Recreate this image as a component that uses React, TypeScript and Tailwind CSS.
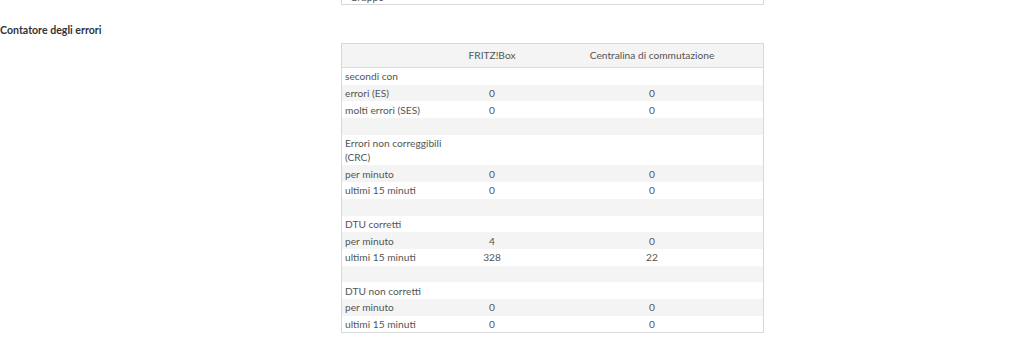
type Row = { label: string[]; a?: string; b?: string };

const rows: Row[] = [
  { label: ["secondi con"] },
  { label: ["errori (ES)"], a: "0", b: "0" },
  { label: ["molti errori (SES)"], a: "0", b: "0" },
  { label: [""] },
  { label: ["Errori non correggibili", "(CRC)"] },
  { label: ["per minuto"], a: "0", b: "0" },
  { label: ["ultimi 15 minuti"], a: "0", b: "0" },
  { label: [""] },
  { label: ["DTU corretti"] },
  { label: ["per minuto"], a: "4", b: "0" },
  { label: ["ultimi 15 minuti"], a: "328", b: "22" },
  { label: [""] },
  { label: ["DTU non corretti"] },
  { label: ["per minuto"], a: "0", b: "0" },
  { label: ["ultimi 15 minuti"], a: "0", b: "0" },
];

export default function App() {
  return (
    <div className="w-[1024px] h-[339px] overflow-hidden bg-white text-[#555] font-['Lato',sans-serif] text-[10.2px]">
      <div className="ml-[341px] w-[423px] h-[5px] border-x border-b border-[#d8d8d8] overflow-hidden">
        <div className="mt-[-10px] pl-[8px] leading-[14px]">Gruppo</div>
      </div>
      <div className="mt-[19px] h-[12px] leading-[12px] font-bold text-[#333] text-[10.6px]">Contatore degli errori</div>
      <div className="mt-[7px] ml-[341px] w-[423px] border border-[#d8d8d8]">
        <div className="grid grid-cols-[101px_98px_1fr] h-[24px] items-center bg-[#f4f4f4] border-b border-[#dcdcdc]">
          <div />
          <div className="text-center">FRITZ!Box</div>
          <div className="text-center">Centralina di commutazione</div>
        </div>
        {rows.map((r, i) => (
          <div
            key={i}
            className={`grid grid-cols-[101px_98px_1fr] py-[1.35px] leading-[14px] ${i % 2 === 1 ? "bg-[#f4f4f4]" : "bg-white"}`}
          >
            <div className="pl-[3px]">
              {r.label.map((l, j) => (
                <div key={j} className="h-[14px]">{l}</div>
              ))}
            </div>
            <div className="text-center">{r.a ?? ""}</div>
            <div className="text-center">{r.b ?? ""}</div>
          </div>
        ))}
      </div>
    </div>
  );
}
